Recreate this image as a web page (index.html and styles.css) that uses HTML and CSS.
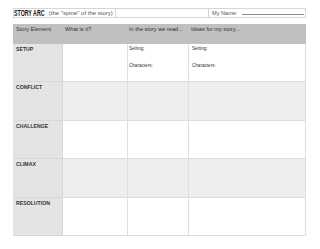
FILE: index.html
```html
<!DOCTYPE html>
<html lang="en">
<head>
    <meta charset="UTF-8">
    <title>Story Arc</title>
    <link rel="stylesheet" href="styles.css">
</head>
<body>
    <div class="sheet">
        <div class="title-bar">
            <div class="title-cell">
                <span class="title">STORY ARC</span>
                <span class="subtitle">(the "spine" of the story)</span>
            </div>
            <div class="title-spacer"></div>
            <div class="name-cell">
                <span>My Name:</span>
                <span class="name-line"></span>
            </div>
        </div>

        <div class="arc-table">
            <div class="head first">Story Element</div>
            <div class="head">What is it?</div>
            <div class="head mid">In the story we read...</div>
            <div class="head">Ideas for my story...</div>

            <div class="label">SETUP</div>
            <div class="cell"></div>
            <div class="cell mid">
                <p class="note">Setting:</p>
                <p class="note">Characters:</p>
            </div>
            <div class="cell">
                <p class="note">Setting:</p>
                <p class="note">Characters:</p>
            </div>

            <div class="label">CONFLICT</div>
            <div class="cell shade"></div>
            <div class="cell shade"></div>
            <div class="cell shade"></div>

            <div class="label">CHALLENGE</div>
            <div class="cell"></div>
            <div class="cell"></div>
            <div class="cell"></div>

            <div class="label">CLIMAX</div>
            <div class="cell shade"></div>
            <div class="cell shade"></div>
            <div class="cell shade"></div>

            <div class="label">RESOLUTION</div>
            <div class="cell"></div>
            <div class="cell"></div>
            <div class="cell"></div>
        </div>
    </div>
</body>
</html>
```

FILE: styles.css
```css
*, *::after, *::before {
    margin: 0;
    padding: 0;
    box-sizing: border-box;
}

body {
    background-color: #ffffff;
    font-family: "Liberation Sans", Arial, sans-serif;
    color: #333333;
}

.sheet {
    width: 320px;
    height: 249px;
    padding: 8px 0 0 13px;
}

/* Title strip */
.title-bar {
    display: flex;
    width: 293px;
    height: 10px;
    border: 1px solid #d6d6d6;
}

.title-cell {
    display: flex;
    align-items: flex-end;
    width: 102px;
    border-right: 1px solid #d6d6d6;
    white-space: nowrap;
}

.title {
    display: inline-block;
    font-size: 8.8px;
    font-weight: 900;
    line-height: 8px;
    color: #111111;
    transform: scaleX(0.6);
    transform-origin: left bottom;
    margin-right: -16px;
}

.subtitle {
    font-size: 6px;
    line-height: 7px;
    color: #555555;
}

.title-spacer {
    flex: 1;
}

.name-cell {
    display: flex;
    align-items: flex-end;
    width: 97px;
    border-left: 1px solid #d6d6d6;
    padding: 0 1px 1px 3px;
    font-size: 5.6px;
    line-height: 6px;
    color: #555555;
}

.name-line {
    flex: 1;
    height: 1px;
    margin: 0 0 1px 4px;
    background-color: #8c8c8c;
}

/* Arc grid */
.arc-table {
    display: grid;
    grid-template-columns: 50px 65px 61px 117px;
    grid-template-rows: 20px repeat(5, 38.4px);
    width: 293px;
    margin-top: 6px;
}

.head {
    background-color: #c0c1bf;
    font-size: 5.6px;
    line-height: 7px;
    padding: 2px 0 0 2px;
    color: #333333;
    white-space: nowrap;
}

.head.first {
    padding-left: 3px;
}

.head.mid {
    padding-left: 1px;
}

.label {
    background-color: #e3e4e3;
    border-bottom: 1px solid #d8d8d8;
    border-right: 1px solid #d8d8d8;
    font-size: 5.2px;
    font-weight: 700;
    line-height: 6px;
    padding: 2px 0 0 3px;
    color: #333333;
}

.cell {
    border-bottom: 1px solid #dedede;
    border-right: 1px solid #dedede;
    padding: 2px 0 0 3px;
}

.cell.mid {
    padding-left: 1px;
}

.shade {
    background-color: #eeeeee;
}

.note {
    font-size: 4.6px;
    line-height: 6px;
    color: #333333;
    margin-bottom: 11px;
}
```
